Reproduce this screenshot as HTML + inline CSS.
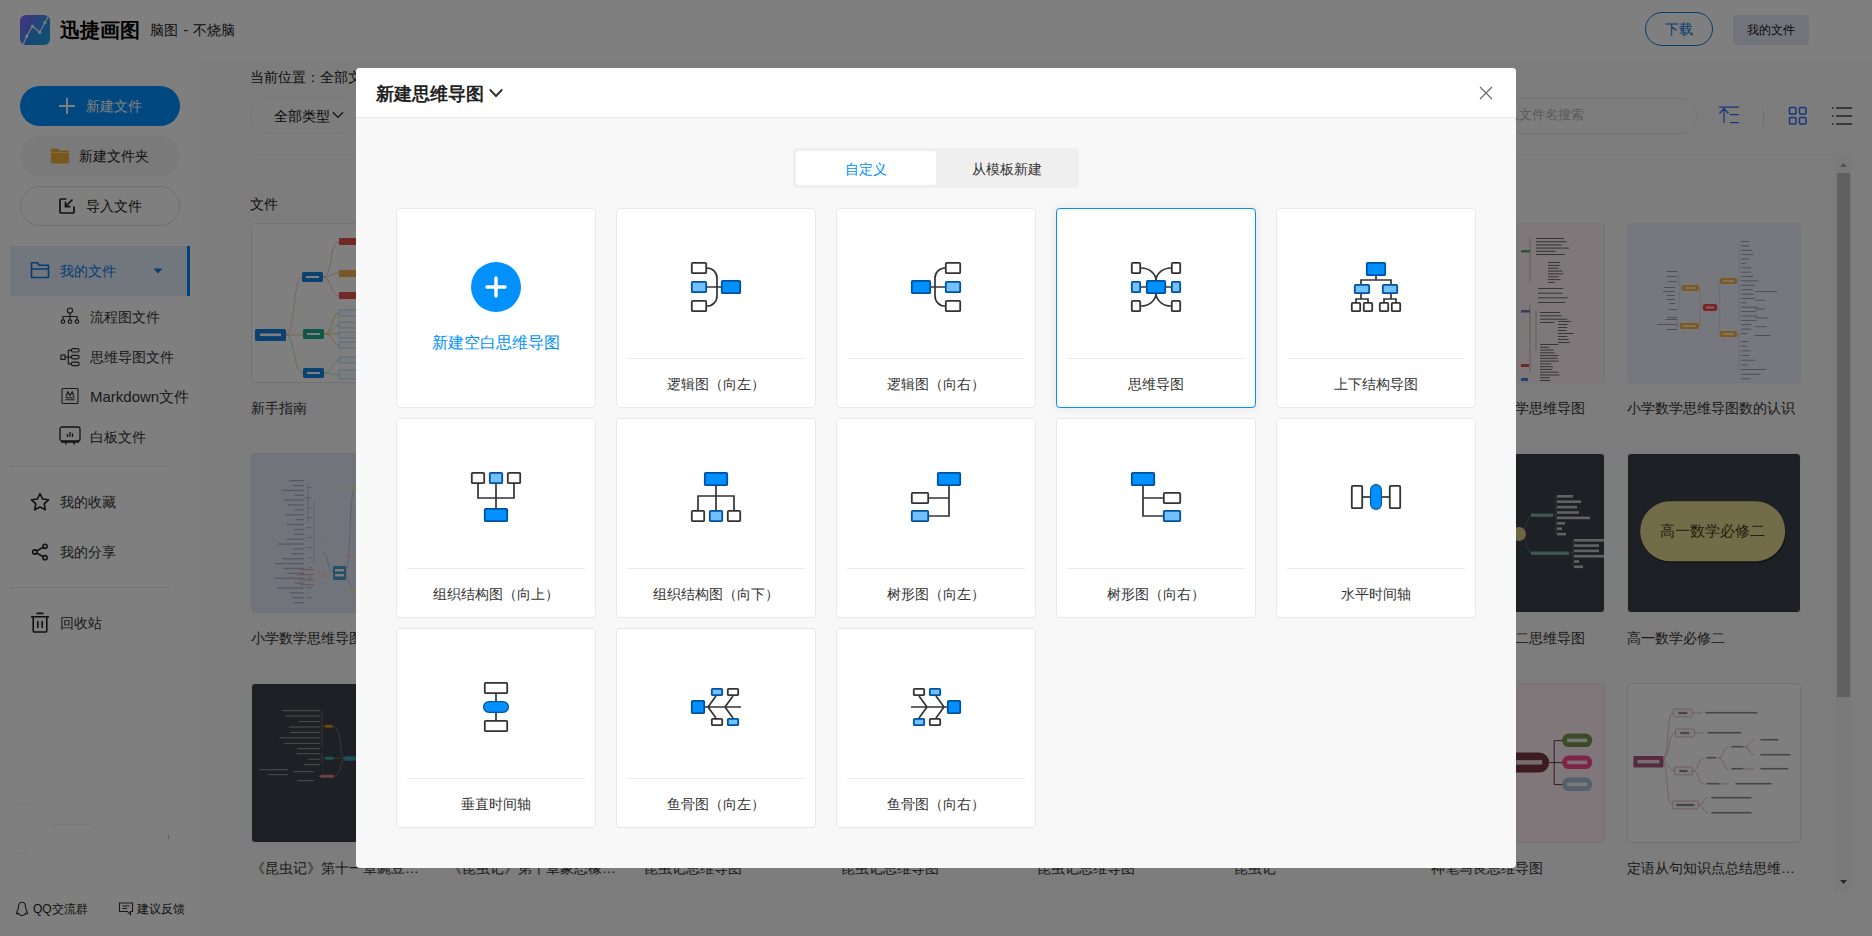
<!DOCTYPE html>
<html lang="zh">
<head>
<meta charset="utf-8">
<title>迅捷画图</title>
<style>
*{box-sizing:border-box;margin:0;padding:0}
html,body{width:1872px;height:936px;overflow:hidden;background:#fff}
body{font-family:"Liberation Sans",sans-serif;font-size:14px;color:#333;position:relative}
.abs{position:absolute}
.t{position:absolute;white-space:nowrap;line-height:20px;height:20px}
/* ---------- page ---------- */
#hdr{position:absolute;left:0;top:0;width:1872px;height:60px;background:#fff}
#side{position:absolute;left:0;top:60px;width:200px;height:876px;background:#fff}
#main{position:absolute;left:200px;top:60px;width:1672px;height:876px;background:#fafafa}
.pill{position:absolute;border-radius:20px;height:40px;width:160px;left:20px}
.thumb{position:absolute;width:174px;height:160px;border-radius:4px;overflow:hidden;border:1px solid #e6e6e6;background:#fff}
.thumb svg{position:absolute;left:0;top:0}
.lbl{position:absolute;white-space:nowrap;line-height:20px;height:20px;font-size:14px;color:#333;width:174px;overflow:hidden;text-overflow:ellipsis}
/* ---------- overlay + modal ---------- */
#mask{position:absolute;left:0;top:0;width:1872px;height:936px;background:rgba(0,0,0,.5)}
#modal{position:absolute;left:356px;top:68px;width:1160px;height:800px;background:#f8f8f8;border-radius:4px;overflow:hidden}
#mh{position:absolute;left:0;top:0;width:1160px;height:50px;background:#fff;border-bottom:1px solid #e8e8e8}
#tabs{position:absolute;left:437px;top:80px;width:286px;height:40px;background:#efefef;border-radius:4px}
#tabs .on{position:absolute;left:3px;top:3px;width:140px;height:34px;background:#fff;border-radius:3px;color:#0090ff;text-align:center;line-height:36px;font-size:14px}
#tabs .off{position:absolute;left:144px;top:3px;width:139px;height:34px;text-align:center;line-height:36px;font-size:14px;color:#333}
.card{position:absolute;width:200px;height:200px;background:#fff;border:1px solid #e8e8e8;border-radius:4px}
.card.sel{border-color:#0090ff;box-shadow:0 0 8px rgba(0,0,0,.09)}
.card svg{position:absolute;left:74px;top:53px;width:50px;height:50px;overflow:visible}
.card .ln{position:absolute;left:10px;top:149px;width:178px;height:1px;background:#ececec}
.card .nm{position:absolute;left:0;top:165px;width:198px;text-align:center;font-size:14px;line-height:20px;color:#333;white-space:nowrap}
.w{fill:#fff;stroke:#333;stroke-width:1.8}
.b{fill:#0090ff;stroke:#00529f;stroke-width:1.8}
.l{fill:#73c0ff;stroke:#00529f;stroke-width:1.8}
.k{fill:none;stroke:#333;stroke-width:1.7}
</style>
</head>
<body>
<!-- ================= PAGE (dimmed) ================= -->
<div id="hdr"><div class="abs" style="left:20px;top:15px;width:30px;height:30px;border-radius:6px;background:linear-gradient(125deg,#8a6cff 0%,#5a7cf8 35%,#2aa0ee 70%,#22c0e0 100%);overflow:hidden">
<svg width="30" height="30" viewBox="0 0 30 30"><path d="M3.5 30 L6.7 21.4 L12.4 11.2 L19.7 17.3 L24.9 7.7 L30 -1 V30 Z" fill="#1f8fe0" opacity=".45"/><path d="M2.5 31 L6.7 21.4 L12.4 11.2 L19.7 17.3 L24.9 7.7 L29 0" fill="none" stroke="#f2f6ff" stroke-width="1.2" stroke-linejoin="round"/><g fill="#f2f6ff"><circle cx="6.7" cy="21.4" r="1.6"/><circle cx="12.4" cy="11.2" r="1.6"/><circle cx="19.7" cy="17.3" r="1.6"/><circle cx="24.9" cy="7.7" r="1.6"/></g></svg></div>
<div class="t" style="left:60px;top:16px;font-size:20px;font-weight:bold;line-height:28px;height:28px;color:#000">迅捷画图</div>
<div class="t" style="left:150px;top:20px;font-size:14px;color:#222;word-spacing:1.5px">脑图 - 不烧脑</div>
<div class="abs" style="left:1645px;top:12px;width:68px;height:34px;border-radius:17px;border:1px solid #0a78dc;color:#0a78dc;text-align:center;line-height:32px;font-size:14px">下载</div>
<div class="abs" style="left:1733px;top:15px;width:76px;height:30px;border-radius:4px;background:#e3eaf6;color:#111;text-align:center;line-height:30px;font-size:12px">我的文件</div></div>
<div id="side"><div class="pill" style="top:26px;background:#0090ff"></div>
<svg class="abs" style="left:59px;top:38px" width="16" height="16" viewBox="0 0 16 16"><path d="M0 8 H16 M8 0 V16" stroke="#fff" stroke-width="2" fill="none"/></svg>
<div class="t" style="left:86px;top:36px;color:#fff">新建文件</div>
<div class="pill" style="top:76px;background:#f5f5f5"></div>
<svg class="abs" style="left:51px;top:88px" width="18" height="16" viewBox="0 0 18 16"><path d="M0 2 Q0 0.5 1.5 0.5 H6.5 L8.5 2.5 H16.5 Q18 2.5 18 4 V14 Q18 15.5 16.5 15.5 H1.5 Q0 15.5 0 14 Z" fill="#f2b13c"/><path d="M0 4.6 H18" stroke="#ffd98a" stroke-width="1"/></svg>
<div class="t" style="left:79px;top:86px;color:#222">新建文件夹</div>
<div class="pill" style="top:126px;border:1px solid #dcdcdc;background:#fff"></div>
<svg class="abs" style="left:58px;top:137px" width="18" height="18" viewBox="0 0 18 18"><path d="M8.5 2 H3 Q2 2 2 3 V15 Q2 16 3 16 H15 Q16 16 16 15 V9.5" fill="none" stroke="#222" stroke-width="1.7"/><path d="M14.5 2.5 L8 9 M7.5 4.8 V9.6 H12.3" fill="none" stroke="#222" stroke-width="1.7"/></svg>
<div class="t" style="left:86px;top:136px;color:#222">导入文件</div>
<div class="abs" style="left:10px;top:186px;width:180px;height:50px;background:#e4eefa;border-right:3px solid #0a7bea"></div>
<svg class="abs" style="left:30px;top:201px" width="20" height="18" viewBox="0 0 20 18"><path d="M1.5 16.5 V1.8 H7.5 L9.2 4.2 H18.5 V16.5 Z M1.5 8 H18.5" fill="none" stroke="#0a7bea" stroke-width="1.6" stroke-linejoin="round"/></svg>
<div class="t" style="left:60px;top:201px;color:#0a7bea">我的文件</div>
<svg class="abs" style="left:153px;top:208px" width="10" height="6" viewBox="0 0 10 6"><path d="M0.5 0.5 H9.5 L5 5.5 Z" fill="#0a7bea"/></svg>
<svg class="abs" style="left:60px;top:247px" width="20" height="18" viewBox="0 0 20 18"><g fill="none" stroke="#333" stroke-width="1.2"><circle cx="10" cy="3.6" r="2.6"/><circle cx="3" cy="14.6" r="1.8"/><circle cx="10" cy="14.6" r="1.8"/><circle cx="17" cy="14.6" r="1.8"/><path d="M10 6.2 V12.8 M3 12.8 V9.5 H17 V12.8"/></g></svg>
<div class="t" style="left:90px;top:247px">流程图文件</div>
<svg class="abs" style="left:60px;top:287px" width="20" height="20" viewBox="0 0 20 20"><g fill="none" stroke="#333" stroke-width="1.2"><rect x="1" y="8" width="4" height="4.4"/><rect x="11.5" y="1.6" width="7.5" height="3.4" rx="1.2"/><rect x="11.5" y="8.4" width="7.5" height="3.4" rx="1.2"/><rect x="11.5" y="15.2" width="7.5" height="3.4" rx="1.2"/><path d="M5 10.2 H11.5 M11.5 3.3 H8.3 V16.9 H11.5"/></g></svg>
<div class="t" style="left:90px;top:287px">思维导图文件</div>
<svg class="abs" style="left:61px;top:327px" width="18" height="18" viewBox="0 0 18 18"><g fill="none" stroke="#333" stroke-width="1.1"><rect x="1" y="1.5" width="16" height="15" rx="1"/><path d="M5 9.5 L6.8 4.8 L9 8.6 L11.2 4.8 L13 9.5 M4.5 10.8 H13.5 M4.5 12.8 H13.5"/></g></svg>
<div class="t" style="left:90px;top:327px;font-size:15px">Markdown文件</div>
<svg class="abs" style="left:59px;top:366px" width="22" height="20" viewBox="0 0 22 20"><g fill="none" stroke="#222" stroke-width="1.3"><rect x="1" y="1" width="20" height="14" rx="2"/><path d="M2 16 H20 M7.5 16 L6.5 18.5 M14.5 16 L15.5 18.5 M8.5 11 V8 M11 11 V6 M13.5 11 V7.5"/></g></svg>
<div class="t" style="left:90px;top:367px">白板文件</div>
<div class="abs" style="left:10px;top:406px;width:160px;height:1px;background:#e6e6e6"></div>
<svg class="abs" style="left:30px;top:432px" width="20" height="20" viewBox="0 0 20 20"><path d="M10 1.6 L12.6 7 L18.5 7.8 L14.2 11.9 L15.3 17.8 L10 15 L4.7 17.8 L5.8 11.9 L1.5 7.8 L7.4 7 Z" fill="none" stroke="#222" stroke-width="1.6" stroke-linejoin="round"/></svg>
<div class="t" style="left:60px;top:432px">我的收藏</div>
<svg class="abs" style="left:31px;top:483px" width="18" height="18" viewBox="0 0 18 18"><g fill="none" stroke="#222" stroke-width="1.6"><circle cx="3.8" cy="9" r="2.1"/><circle cx="14" cy="3.3" r="2.1"/><circle cx="14" cy="14.7" r="2.1"/><path d="M5.7 8 L12.1 4.3 M5.7 10 L12.1 13.7"/></g></svg>
<div class="t" style="left:60px;top:482px">我的分享</div>
<div class="abs" style="left:10px;top:527px;width:160px;height:1px;background:#e6e6e6"></div>
<svg class="abs" style="left:30px;top:552px" width="20" height="22" viewBox="0 0 20 22"><g fill="none" stroke="#222" stroke-width="1.6"><path d="M1 4.8 H19 M6.5 1.4 H13.5 M3.2 4.8 V19 Q3.2 20 4.2 20 H15.8 Q16.8 20 16.8 19 V4.8 M7.8 9 V16 M12.2 9 V16"/></g></svg>
<div class="t" style="left:60px;top:553px">回收站</div>
<div class="abs" style="left:14px;top:744px;width:22px;height:1px;background:#f0f0f0"></div>
<div class="abs" style="left:51px;top:764px;width:40px;height:1px;background:#f0f0f0"></div>
<div class="abs" style="left:14px;top:793px;width:14px;height:1px;background:#f0f0f0"></div>
<div class="abs" style="left:166px;top:703px;width:4px;height:1px;background:#f0f0f0"></div>
<div class="abs" style="left:168px;top:775px;width:1px;height:4px;background:#e8b090"></div>
<svg class="abs" style="left:15px;top:841px" width="14" height="16" viewBox="0 0 14 16"><path d="M7 1.2 C4 1.2 3.4 4 3.4 6.5 C3.4 8.3 1.6 10.2 1.6 12.2 C1.6 13.6 2.6 13 3.4 12.2 C4 14 5.2 14.6 7 14.6 C8.8 14.6 10 14 10.6 12.2 C11.4 13 12.4 13.6 12.4 12.2 C12.4 10.2 10.6 8.3 10.6 6.5 C10.6 4 10 1.2 7 1.2 Z" fill="none" stroke="#333" stroke-width="1.1"/></svg>
<div class="t" style="left:33px;top:839px;font-size:12px;color:#222">QQ交流群</div>
<svg class="abs" style="left:118px;top:842px" width="16" height="14" viewBox="0 0 16 14"><path d="M1.5 1 H14.5 V9.5 H12.5 V12.5 L9.5 9.5 H1.5 Z M4.5 4 H11.5 M4.5 6.5 H9" fill="none" stroke="#333" stroke-width="1.1"/></svg>
<div class="t" style="left:137px;top:839px;font-size:12px;color:#222">建议反馈</div></div>
<div id="main"><div class="t" style="left:50px;top:7px;color:#222">当前位置：全部文件</div>
<div class="abs" style="left:50px;top:37px;width:108px;height:37px;border:1px solid #ececec;border-radius:18.5px"></div>
<div class="t" style="left:74px;top:46px;color:#111">全部类型</div>
<svg class="abs" style="left:132px;top:51px" width="12" height="8" viewBox="0 0 12 8"><path d="M1 1.2 L6 6.4 L11 1.2" fill="none" stroke="#222" stroke-width="1.3"/></svg>
<div class="abs" style="left:50px;top:95px;width:1602px;height:1px;background:#f1f1f1"></div>
<div class="t" style="left:50px;top:134px;color:#222">文件</div>
<div class="abs" style="left:1200px;top:38px;width:298px;height:36px;border:1px solid #e6e6e6;border-radius:18px"></div>
<div class="t" style="left:1279.5px;top:45px;font-size:13.3px;color:#b4b4b4">请输入文件名搜索</div>
<svg class="abs" style="left:1518px;top:45px" width="22" height="20" viewBox="0 0 22 20"><path d="M1 2 H21 M12 9.5 H21 M12 17.5 H21 M6 18 V3.5 M1.5 8.5 L6 3.5 L10.5 8.5" fill="none" stroke="#2f6cf6" stroke-width="1.25"/></svg>
<div class="abs" style="left:1563px;top:50px;width:1px;height:16px;background:#d8d8d8"></div>
<svg class="abs" style="left:1588px;top:46px" width="20" height="20" viewBox="0 0 20 20"><g fill="none" stroke="#2f6cf6" stroke-width="1.5"><rect x="1.5" y="1.5" width="6.5" height="6.5" rx="1"/><rect x="11.5" y="1.5" width="6.5" height="6.5" rx="1"/><rect x="1.5" y="11.5" width="6.5" height="6.5" rx="1"/><rect x="11.5" y="11.5" width="6.5" height="6.5" rx="1"/></g></svg>
<svg class="abs" style="left:1631px;top:46px" width="22" height="20" viewBox="0 0 22 20"><path d="M5 2 H21 M5 10 H21 M5 18 H21 M1 2 H2.6 M1 10 H2.6 M1 18 H2.6" fill="none" stroke="#444" stroke-width="1.5"/></svg>
<div class="abs" style="left:1635px;top:96px;width:17px;height:736px;background:#f5f5f5"></div>
<div class="abs" style="left:1637px;top:113px;width:13px;height:524px;background:#c1c1c1"></div>
<svg class="abs" style="left:1640px;top:103px" width="7" height="4" viewBox="0 0 7 4"><path d="M0 4 L3.5 0 L7 4 Z" fill="#a3a3a3"/></svg>
<svg class="abs" style="left:1640px;top:820px" width="7" height="4" viewBox="0 0 7 4"><path d="M0 0 L3.5 4 L7 0 Z" fill="#505050"/></svg>
<div class="thumb" style="left:51px;top:163px;background:#fff;border-color:#e6e6e6"><svg width="174" height="160" viewBox="0 0 174 160"><g transform="translate(-1,0)"><g fill="none" stroke-width="0.8"><path d="M35 111 C44 111 42 53 51 53" stroke="#f0b8a8"/><path d="M35 111 H52" stroke="#e8c878"/><path d="M35 111 C44 111 42 149 52 149" stroke="#a8d8a8"/>
<path d="M72 53 C82 53 78 18 88 18 M72 53 C80 53 80 49 88 49 M72 53 C80 53 80 72 88 72" stroke="#f0b0a0"/>
<path d="M73 110 C82 110 80 89 88 89 M73 110 C82 110 82 101 88 101 M73 110 H88 M73 110 C82 110 82 121 88 121" stroke="#e8c878"/>
<path d="M73 149 C82 149 82 136 88 136 M73 149 C82 149 82 151 88 151" stroke="#a8d8a8"/></g>
<rect x="4" y="105" width="31" height="12" rx="1.5" fill="#1683e0"/><rect x="51" y="48" width="21" height="10" rx="1.5" fill="#1683e0"/><rect x="52" y="105" width="21" height="10" rx="1.5" fill="#1fae8c"/><rect x="52" y="144" width="21" height="10" rx="1.5" fill="#1683e0"/>
<rect x="88" y="14" width="17" height="7" fill="#e85050"/><rect x="88" y="46" width="17" height="7" fill="#f0b050"/><rect x="88" y="68" width="17" height="7" fill="#e85050"/>
<g fill="#f4faff" stroke="#9cc8f0" stroke-width="0.7"><rect x="88" y="86" width="22" height="6"/><rect x="88" y="98" width="22" height="6"/><rect x="88" y="108" width="22" height="6"/><rect x="88" y="118" width="22" height="6"/><rect x="88" y="133" width="22" height="6"/><rect x="88" y="146" width="22" height="9"/></g>
<g fill="#fff"><rect x="9" y="109.5" width="21" height="2.6"/><rect x="55" y="52" width="13" height="2"/><rect x="56" y="109" width="13" height="2"/><rect x="56" y="148" width="13" height="2"/></g></g></svg></div>
<div class="lbl" style="left:51px;top:338px">新手指南</div>
<div class="thumb" style="left:51px;top:393px;background:#e4e9f6;border-color:#dde2ee"><svg width="174" height="160" viewBox="0 0 174 160"><rect x="36.9" y="26.0" width="15.1" height="1.3" fill="#aab2c4"/><rect x="40.7" y="30.9" width="11.3" height="1.3" fill="#aab2c4"/><rect x="29.7" y="35.8" width="22.3" height="1.3" fill="#aab2c4"/><rect x="42.4" y="40.6" width="9.6" height="1.3" fill="#aab2c4"/><rect x="32.2" y="45.5" width="19.8" height="1.3" fill="#aab2c4"/><rect x="36.0" y="50.4" width="16.0" height="1.3" fill="#aab2c4"/><rect x="42.7" y="55.3" width="9.3" height="1.3" fill="#aab2c4"/><rect x="32.8" y="60.2" width="19.2" height="1.3" fill="#aab2c4"/><rect x="43.2" y="65.0" width="8.8" height="1.3" fill="#aab2c4"/><rect x="34.5" y="69.9" width="17.5" height="1.3" fill="#aab2c4"/><rect x="42.5" y="74.8" width="9.5" height="1.3" fill="#aab2c4"/><rect x="42.0" y="79.7" width="10.0" height="1.3" fill="#aab2c4"/><rect x="34.7" y="84.6" width="17.3" height="1.3" fill="#aab2c4"/><rect x="25.8" y="89.4" width="26.2" height="1.3" fill="#aab2c4"/><rect x="41.3" y="94.3" width="10.7" height="1.3" fill="#aab2c4"/><rect x="39.1" y="99.2" width="12.9" height="1.3" fill="#aab2c4"/><rect x="30.2" y="104.1" width="21.8" height="1.3" fill="#aab2c4"/><rect x="23.2" y="109.0" width="28.8" height="1.3" fill="#aab2c4"/><rect x="31.3" y="113.8" width="20.7" height="1.3" fill="#aab2c4"/><rect x="35.3" y="118.7" width="16.7" height="1.3" fill="#aab2c4"/><rect x="22.5" y="123.6" width="29.5" height="1.3" fill="#aab2c4"/><rect x="43.0" y="128.5" width="9.0" height="1.3" fill="#aab2c4"/><rect x="25.1" y="133.4" width="26.9" height="1.3" fill="#aab2c4"/><rect x="37.6" y="138.2" width="14.4" height="1.3" fill="#aab2c4"/><rect x="40.8" y="143.1" width="11.2" height="1.3" fill="#aab2c4"/><rect x="41.4" y="148.0" width="10.6" height="1.3" fill="#aab2c4"/><rect x="55.5" y="33.0" width="4.5" height="1.2" fill="#b8bfd0"/><rect x="52.9" y="43.0" width="7.1" height="1.2" fill="#b8bfd0"/><rect x="56.1" y="53.0" width="3.9" height="1.2" fill="#b8bfd0"/><rect x="54.1" y="63.0" width="5.9" height="1.2" fill="#b8bfd0"/><rect x="53.8" y="73.0" width="6.2" height="1.2" fill="#b8bfd0"/><rect x="55.1" y="83.0" width="4.9" height="1.2" fill="#b8bfd0"/><rect x="54.3" y="93.0" width="5.7" height="1.2" fill="#b8bfd0"/><rect x="56.7" y="103.0" width="3.3" height="1.2" fill="#b8bfd0"/><rect x="56.7" y="113.0" width="3.3" height="1.2" fill="#b8bfd0"/><rect x="56.0" y="123.0" width="4.0" height="1.2" fill="#b8bfd0"/><rect x="53.6" y="133.0" width="6.4" height="1.2" fill="#b8bfd0"/><rect x="54.9" y="143.0" width="5.1" height="1.2" fill="#b8bfd0"/><g fill="none" stroke="#9fb4cc" stroke-width="0.7"><path d="M56 30 V70 M62 48 V110 M94 118 C100 100 96 34 104 34 M94 121 C100 130 98 136 104 136 M81 118 C74 118 78 98 70 98"/></g><rect x="81" y="112" width="13" height="14" rx="1" fill="#4f9fd8"/><rect x="83" y="115" width="9" height="2.4" fill="#fff"/><rect x="83" y="120" width="9" height="2.4" fill="#fff"/><rect x="97" y="31" width="7" height="5" fill="#e4ecc8"/><rect x="97" y="101" width="8" height="4" fill="#f0d8d8"/><rect x="97" y="133" width="8" height="5" fill="#f0e4c8"/><rect x="68" y="82" width="6" height="5" fill="#dfe8f0"/><rect x="66" y="118" width="9" height="5" fill="#f0d8d8"/><rect x="48.2" y="115.0" width="13.8" height="1.3" fill="#e0b0b0"/><rect x="45.0" y="120.0" width="17.0" height="1.3" fill="#e0b0b0"/><rect x="46.6" y="125.0" width="15.4" height="1.3" fill="#e0b0b0"/><rect x="48.4" y="130.0" width="13.6" height="1.3" fill="#e0b0b0"/></svg></div>
<div class="lbl" style="left:51px;top:568px">小学数学思维导图</div>
<div class="thumb" style="left:51px;top:623px;background:#3a4048;border-color:#f2f2f2"><svg width="174" height="160" viewBox="0 0 174 160"><g transform="translate(0,18.2)"><rect x="30.2" y="8.0" width="37.8" height="1.0" fill="#a0a0a0"/><rect x="33.0" y="13.4" width="35.0" height="1.0" fill="#a0a0a0"/><rect x="46.7" y="18.9" width="21.3" height="1.0" fill="#a0a0a0"/><rect x="36.8" y="24.3" width="31.2" height="1.0" fill="#a0a0a0"/><rect x="38.2" y="29.7" width="29.8" height="1.0" fill="#a0a0a0"/><rect x="27.7" y="35.1" width="40.3" height="1.0" fill="#a0a0a0"/><rect x="32.1" y="40.6" width="35.9" height="1.0" fill="#a0a0a0"/><rect x="45.4" y="46.0" width="22.6" height="1.0" fill="#a0a0a0"/><rect x="44.3" y="51.0" width="23.7" height="1.0" fill="#a0a0a0"/><rect x="56.3" y="56.5" width="11.7" height="1.0" fill="#a0a0a0"/><rect x="52.1" y="62.0" width="15.9" height="1.0" fill="#a0a0a0"/><rect x="7.4" y="67.0" width="28.6" height="1.0" fill="#a0a0a0"/><rect x="15.9" y="72.0" width="20.1" height="1.0" fill="#a0a0a0"/><rect x="41.1" y="69.0" width="20.9" height="1.0" fill="#a0a0a0"/><rect x="45.6" y="78.0" width="16.4" height="1.0" fill="#a0a0a0"/><g fill="none" stroke="#8a7a70" stroke-width="0.8"><path d="M70 8 V46 M70 24 H74 M80 24 C92 24 86 56 93 56 M70 51 V62 M70 56 H74 M82 56 H93 M66 74 H68 M82 74 C90 74 88 56 93 56"/></g><rect x="73" y="22.5" width="8" height="3" rx="1.5" fill="#e08a30"/><rect x="73" y="54.5" width="9" height="3" rx="1.5" fill="#30b0a0"/><rect x="68" y="72.5" width="14" height="3" rx="1.5" fill="#e08080"/><rect x="92" y="54" width="12" height="4.5" rx="2.2" fill="#3aa0b8"/></g></svg></div>
<div class="lbl" style="left:51px;top:798px">《昆虫记》第十一章豌豆荚里的小虫</div>
<div class="lbl" style="left:248px;top:798px">《昆虫记》第十章象态橡栗象的一生</div>
<div class="lbl" style="left:444px;top:798px">昆虫记思维导图</div>
<div class="lbl" style="left:641px;top:798px">昆虫记思维导图</div>
<div class="lbl" style="left:837px;top:798px">昆虫记思维导图</div>
<div class="lbl" style="left:1034px;top:798px">昆虫记</div>
<div class="thumb" style="left:1231px;top:163px;background:#fdf0f5;border-color:#f2e6ea"><svg width="174" height="160" viewBox="0 0 174 160"><g fill="none" stroke="#90a890" stroke-width="0.7"><path d="M98 14 V58 M98 80 V148 M104 86 V126"/></g><rect x="104.0" y="14.0" width="28.0" height="1.0" fill="#6a6a6a"/><rect x="104.0" y="17.2" width="30.3" height="1.0" fill="#6a6a6a"/><rect x="104.0" y="20.4" width="25.8" height="1.0" fill="#6a6a6a"/><rect x="104.0" y="23.6" width="33.0" height="1.0" fill="#6a6a6a"/><rect x="104.0" y="26.8" width="19.5" height="1.0" fill="#6a6a6a"/><rect x="104.0" y="30.0" width="28.7" height="1.0" fill="#6a6a6a"/><rect x="116.0" y="38.0" width="11.9" height="1.0" fill="#6a6a6a"/><rect x="116.0" y="40.9" width="11.8" height="1.0" fill="#6a6a6a"/><rect x="116.0" y="43.7" width="10.6" height="1.0" fill="#6a6a6a"/><rect x="116.0" y="46.6" width="14.4" height="1.0" fill="#6a6a6a"/><rect x="116.0" y="49.4" width="15.4" height="1.0" fill="#6a6a6a"/><rect x="116.0" y="52.3" width="10.7" height="1.0" fill="#6a6a6a"/><rect x="116.0" y="55.1" width="12.6" height="1.0" fill="#6a6a6a"/><rect x="116.0" y="58.0" width="6.6" height="1.0" fill="#6a6a6a"/><rect x="106.0" y="64.0" width="25.2" height="1.0" fill="#6a6a6a"/><rect x="106.0" y="68.7" width="24.4" height="1.0" fill="#6a6a6a"/><rect x="106.0" y="73.3" width="29.9" height="1.0" fill="#6a6a6a"/><rect x="106.0" y="78.0" width="27.2" height="1.0" fill="#6a6a6a"/><rect x="108.0" y="88.0" width="19.7" height="1.0" fill="#6a6a6a"/><rect x="108.0" y="91.3" width="21.7" height="1.0" fill="#6a6a6a"/><rect x="108.0" y="94.7" width="27.4" height="1.0" fill="#6a6a6a"/><rect x="108.0" y="98.0" width="14.5" height="1.0" fill="#6a6a6a"/><rect x="126.0" y="97.0" width="12.6" height="1.0" fill="#6a6a6a"/><rect x="126.0" y="100.0" width="9.7" height="1.0" fill="#6a6a6a"/><rect x="126.0" y="103.0" width="9.2" height="1.0" fill="#6a6a6a"/><rect x="126.0" y="106.0" width="8.6" height="1.0" fill="#6a6a6a"/><rect x="126.0" y="109.0" width="15.7" height="1.0" fill="#6a6a6a"/><rect x="126.0" y="112.0" width="9.3" height="1.0" fill="#6a6a6a"/><rect x="126.0" y="115.0" width="10.5" height="1.0" fill="#6a6a6a"/><rect x="126.0" y="118.0" width="11.9" height="1.0" fill="#6a6a6a"/><rect x="108.0" y="120.0" width="18.5" height="1.0" fill="#6a6a6a"/><rect x="108.0" y="122.8" width="9.0" height="1.0" fill="#6a6a6a"/><rect x="108.0" y="125.5" width="13.4" height="1.0" fill="#6a6a6a"/><rect x="108.0" y="128.3" width="14.6" height="1.0" fill="#6a6a6a"/><rect x="108.0" y="131.1" width="18.6" height="1.0" fill="#6a6a6a"/><rect x="108.0" y="133.8" width="17.8" height="1.0" fill="#6a6a6a"/><rect x="108.0" y="136.6" width="18.4" height="1.0" fill="#6a6a6a"/><rect x="108.0" y="139.4" width="11.3" height="1.0" fill="#6a6a6a"/><rect x="108.0" y="142.2" width="13.0" height="1.0" fill="#6a6a6a"/><rect x="108.0" y="144.9" width="12.3" height="1.0" fill="#6a6a6a"/><rect x="108.0" y="147.7" width="18.6" height="1.0" fill="#6a6a6a"/><rect x="108.0" y="150.5" width="19.5" height="1.0" fill="#6a6a6a"/><rect x="108.0" y="153.2" width="9.8" height="1.0" fill="#6a6a6a"/><rect x="108.0" y="156.0" width="10.1" height="1.0" fill="#6a6a6a"/><rect x="89" y="26" width="9" height="2.5" fill="#50b070"/><rect x="89" y="86" width="9" height="2.5" fill="#8070c8"/><rect x="89" y="140" width="8" height="3" fill="#e05050"/><rect x="89" y="154" width="7" height="3" fill="#4080e0"/></svg></div>
<div class="lbl" style="left:1231px;top:338px">七年级上册数学思维导图</div>
<div class="thumb" style="left:1427px;top:163px;background:#efeffc;border-color:#e8e8f4"><svg width="174" height="160" viewBox="0 0 174 160"><g transform="translate(-1,-1)"><g fill="none" stroke="#c8c8d8" stroke-width="0.7"><path d="M76 84 C70 84 76 65 72 65 M76 84 C70 84 76 103 72 103 M90 84 C96 84 90 58 93 58 M90 84 C96 84 90 111 93 111 M110 58 H112 V20 M112 58 V100 M110 111 H112 V150 M55 65 C50 65 54 48 50 48 M55 65 C50 65 54 86 50 86 M53 103 H50 V96 M50 103 V106"/></g><rect x="76" y="81" width="14" height="7" rx="2" fill="#f04848"/><g fill="#ffb440"><rect x="55" y="62" width="17" height="6" rx="2"/><rect x="53" y="100" width="19" height="6" rx="2"/><rect x="93" y="55" width="17" height="6" rx="2"/><rect x="93" y="108" width="17" height="6" rx="2"/></g><g fill="#fff" opacity=".7"><rect x="58" y="64" width="11" height="2"/><rect x="56" y="102" width="13" height="2"/><rect x="96" y="57" width="11" height="2"/><rect x="96" y="110" width="11" height="2"/><rect x="79" y="83.5" width="8" height="2"/></g><rect x="114.0" y="18.0" width="8.0" height="1.0" fill="#9c9cac"/><rect x="114.0" y="22.4" width="8.0" height="1.0" fill="#9c9cac"/><rect x="114.0" y="26.8" width="11.3" height="1.0" fill="#9c9cac"/><rect x="114.0" y="31.1" width="12.7" height="1.0" fill="#9c9cac"/><rect x="114.0" y="35.5" width="8.4" height="1.0" fill="#9c9cac"/><rect x="114.0" y="39.9" width="5.1" height="1.0" fill="#9c9cac"/><rect x="114.0" y="44.3" width="10.4" height="1.0" fill="#9c9cac"/><rect x="114.0" y="48.7" width="9.8" height="1.0" fill="#9c9cac"/><rect x="114.0" y="53.0" width="12.4" height="1.0" fill="#9c9cac"/><rect x="114.0" y="57.4" width="17.4" height="1.0" fill="#9c9cac"/><rect x="114.0" y="61.8" width="14.0" height="1.0" fill="#9c9cac"/><rect x="114.0" y="66.2" width="11.7" height="1.0" fill="#9c9cac"/><rect x="114.0" y="70.6" width="13.0" height="1.0" fill="#9c9cac"/><rect x="114.0" y="75.0" width="13.8" height="1.0" fill="#9c9cac"/><rect x="114.0" y="79.3" width="5.7" height="1.0" fill="#9c9cac"/><rect x="114.0" y="83.7" width="16.7" height="1.0" fill="#9c9cac"/><rect x="114.0" y="88.1" width="15.1" height="1.0" fill="#9c9cac"/><rect x="114.0" y="92.5" width="16.4" height="1.0" fill="#9c9cac"/><rect x="114.0" y="96.9" width="15.4" height="1.0" fill="#9c9cac"/><rect x="114.0" y="101.2" width="10.1" height="1.0" fill="#9c9cac"/><rect x="114.0" y="105.6" width="10.2" height="1.0" fill="#9c9cac"/><rect x="114.0" y="110.0" width="6.3" height="1.0" fill="#9c9cac"/><rect x="128.0" y="68.0" width="22.0" height="1.0" fill="#9c9cac"/><rect x="128.0" y="76.8" width="9.4" height="1.0" fill="#9c9cac"/><rect x="128.0" y="85.6" width="9.5" height="1.0" fill="#9c9cac"/><rect x="128.0" y="94.4" width="12.6" height="1.0" fill="#9c9cac"/><rect x="128.0" y="103.2" width="11.6" height="1.0" fill="#9c9cac"/><rect x="128.0" y="112.0" width="15.5" height="1.0" fill="#9c9cac"/><rect x="114.0" y="118.0" width="7.2" height="1.0" fill="#9c9cac"/><rect x="114.0" y="122.7" width="6.0" height="1.0" fill="#9c9cac"/><rect x="114.0" y="127.3" width="9.3" height="1.0" fill="#9c9cac"/><rect x="114.0" y="132.0" width="8.2" height="1.0" fill="#9c9cac"/><rect x="114.0" y="136.7" width="14.0" height="1.0" fill="#9c9cac"/><rect x="114.0" y="141.3" width="6.6" height="1.0" fill="#9c9cac"/><rect x="114.0" y="146.0" width="25.2" height="1.0" fill="#9c9cac"/><rect x="114.0" y="150.7" width="19.5" height="1.0" fill="#9c9cac"/><rect x="114.0" y="155.3" width="9.3" height="1.0" fill="#9c9cac"/><rect x="114.0" y="160.0" width="11.5" height="1.0" fill="#9c9cac"/><rect x="39.9" y="48.0" width="10.1" height="1.0" fill="#9c9cac"/><rect x="39.8" y="53.0" width="10.2" height="1.0" fill="#9c9cac"/><rect x="41.3" y="58.0" width="8.7" height="1.0" fill="#9c9cac"/><rect x="37.1" y="64.0" width="10.9" height="1.0" fill="#9c9cac"/><rect x="36.0" y="68.0" width="12.0" height="1.0" fill="#9c9cac"/><rect x="39.7" y="72.0" width="8.3" height="1.0" fill="#9c9cac"/><rect x="39.6" y="76.0" width="8.4" height="1.0" fill="#9c9cac"/><rect x="42.4" y="80.0" width="5.6" height="1.0" fill="#9c9cac"/><rect x="41.6" y="86.0" width="8.4" height="1.0" fill="#9c9cac"/><rect x="40.6" y="94.0" width="9.4" height="1.0" fill="#9c9cac"/><rect x="38.3" y="96.0" width="11.7" height="1.0" fill="#9c9cac"/><rect x="30.4" y="101.0" width="19.6" height="1.0" fill="#9c9cac"/><rect x="39.7" y="106.0" width="10.3" height="1.0" fill="#9c9cac"/></g></svg></div>
<div class="lbl" style="left:1427px;top:338px">小学数学思维导图数的认识</div>
<div class="thumb" style="left:1231px;top:393px;background:#3a4048;border-color:#f2f2f2"><svg width="174" height="160" viewBox="0 0 174 160"><circle cx="87" cy="80" r="7" fill="#d8cc88"/><g fill="none" stroke="#7a7468" stroke-width="0.8"><path d="M92 76 C98 62 96 61 100 61 M92 84 C98 98 96 99 100 99 M121 61 H124 V42 M124 61 V80 M138 99 H141 V86 M141 99 V112"/></g><rect x="99" y="59.5" width="22" height="3.4" fill="#7ab0a0"/><rect x="99" y="97.5" width="38" height="3.4" fill="#7ab0a0"/><rect x="125" y="41.0" width="16" height="2.6" fill="#c4c4c4"/><rect x="125" y="46.4" width="24" height="2.6" fill="#c4c4c4"/><rect x="125" y="51.8" width="20" height="2.6" fill="#c4c4c4"/><rect x="125" y="57.2" width="22" height="2.6" fill="#c4c4c4"/><rect x="125" y="62.6" width="33" height="2.6" fill="#c4c4c4"/><rect x="125" y="68.0" width="8" height="2.6" fill="#c4c4c4"/><rect x="125" y="73.4" width="5" height="2.6" fill="#c4c4c4"/><rect x="125" y="78.8" width="9" height="2.6" fill="#c4c4c4"/><rect x="142" y="85.0" width="30" height="2.6" fill="#c4c4c4"/><rect x="142" y="90.3" width="25" height="2.6" fill="#c4c4c4"/><rect x="142" y="95.6" width="25" height="2.6" fill="#c4c4c4"/><rect x="142" y="100.9" width="30" height="2.6" fill="#c4c4c4"/><rect x="142" y="106.2" width="5" height="2.6" fill="#c4c4c4"/><rect x="142" y="111.5" width="9" height="2.6" fill="#c4c4c4"/></svg></div>
<div class="lbl" style="left:1231px;top:568px">高一数学必修二思维导图</div>
<div class="thumb" style="left:1427px;top:393px;background:#3a4048;border-color:#f2f2f2"><svg width="174" height="160" viewBox="0 0 174 160"><g transform="translate(-0.8,-0.8)"><rect x="14" y="50" width="145" height="60" rx="30" fill="#2a2d30"/><rect x="13" y="48" width="145" height="60" rx="30" fill="#e6d890"/><text x="85.5" y="82.6" text-anchor="middle" font-size="14.6" fill="#4a3c20" font-family="Liberation Sans, sans-serif">高一数学必修二</text></g></svg></div>
<div class="lbl" style="left:1427px;top:568px">高一数学必修二</div>
<div class="thumb" style="left:1231px;top:623px;background:#ffeef5;border-color:#f4e2ea"><svg width="174" height="160" viewBox="0 0 174 160"><g transform="translate(-1.8,-1.4)"><g fill="none" stroke="#4a2a30" stroke-width="0.9"><path d="M119 80 H133 M124 58 H133 M124 58 V102 H133"/></g><rect x="60" y="70" width="59" height="20" rx="10" fill="#783840"/><rect x="86" y="77.5" width="26" height="4.5" fill="#e8d8dc"/><rect x="132" y="51" width="30" height="13.5" rx="6.7" fill="#7a9450"/><rect x="132" y="73" width="30" height="13.5" rx="6.7" fill="#ff4a90"/><rect x="132" y="95" width="30" height="13.5" rx="6.7" fill="#a8c0d8"/><g fill="#fff" opacity=".85"><rect x="137" y="56" width="20" height="3.6"/><rect x="137" y="78" width="20" height="3.6"/><rect x="137" y="100" width="20" height="3.6"/></g></g></svg></div>
<div class="lbl" style="left:1231px;top:798px">神笔马良思维导图</div>
<div class="thumb" style="left:1427px;top:623px;background:#fff;border-color:#e0e0e0"><svg width="174" height="160" viewBox="0 0 174 160"><g transform="translate(-1.6,-1.1)"><g fill="none" stroke="#d8a8b8" stroke-width="0.8"><path d="M37 78 C44 60 40 30 47 30 M37 78 C44 70 42 50 49 50 M37 78 C42 78 42 88 48 88 M37 78 C42 90 40 122 46 122 M66 30 H76 M68 50 H78 M66 88 C74 88 70 75 78 75 M66 88 C74 88 70 101 78 101 M92 75 C98 75 96 64 102 64 M92 75 C98 75 96 86 102 86 M118 64 C124 64 122 57 128 57 M118 64 C124 64 122 72 128 72 M118 86 H128 M92 101 H102 M72 122 C78 122 76 115 82 115 M72 122 C78 122 76 130 82 130"/></g><rect x="7" y="73" width="30" height="11.5" rx="1" fill="#a85878"/><rect x="11" y="77" width="22" height="3.5" fill="#f0dce4"/><g fill="#fdf6f8" stroke="#d8a8b8" stroke-width="0.8"><rect x="47" y="26" width="19" height="8" rx="1"/><rect x="49" y="46" width="19" height="8" rx="1"/><rect x="48" y="84" width="18" height="8" rx="1"/><rect x="46" y="118" width="26" height="8" rx="1"/></g><g fill="#8a8a8a"><rect x="52" y="29" width="9" height="2.2"/><rect x="54" y="49" width="9" height="2.2"/><rect x="53" y="87" width="8" height="2.2"/><rect x="50" y="121" width="18" height="2.2"/><rect x="79" y="29" width="52" height="1.6"/><rect x="81" y="49" width="34" height="1.6"/><rect x="80" y="74" width="10" height="1.6"/><rect x="80" y="100" width="13" height="1.6"/><rect x="105" y="63" width="12" height="1.6"/><rect x="105" y="85" width="12" height="1.6"/><rect x="134" y="56" width="18" height="1.6"/><rect x="134" y="71" width="30" height="1.6"/><rect x="134" y="85" width="28" height="1.6"/><rect x="109" y="100" width="36" height="1.6"/><rect x="85" y="114" width="40" height="1.6"/><rect x="85" y="129" width="40" height="1.6"/></g></g></svg></div>
<div class="lbl" style="left:1427px;top:798px">定语从句知识点总结思维导图</div></div>
<div id="mask"></div>
<!-- ================= MODAL ================= -->
<div id="modal">
<div id="mh"><div class="t" style="left:20px;top:14px;font-size:18px;font-weight:bold;line-height:24px;height:24px;color:#222">新建思维导图</div>
<svg class="abs" style="left:132px;top:19px" width="16" height="12" viewBox="0 0 16 12"><path d="M1.8 2.5 L8 9 L14.2 2.5" fill="none" stroke="#333" stroke-width="1.9"/></svg>
<svg class="abs" style="left:1123px;top:18px" width="14" height="14" viewBox="0 0 14 14"><path d="M1 1 L13 13 M13 1 L1 13" fill="none" stroke="#666" stroke-width="1.1"/></svg></div>
<div id="tabs"><div class="on">自定义</div><div class="off">从模板新建</div></div>
<div class="card" style="left:40px;top:140px"><div class="abs" style="left:74px;top:53px;width:50px;height:50px;border-radius:25px;background:#0090ff"></div>
<svg viewBox="0 0 50 50"><path d="M16 25 H34 M25 16 V34" fill="none" stroke="#fff" stroke-width="3.5" stroke-linecap="round"/></svg>
<div class="nm" style="top:123px;font-size:16px;line-height:22px;color:#0090ff">新建空白思维导图</div></div>
<div class="card" style="left:260px;top:140px"><svg viewBox="0 0 50 50"><path class="k" d="M16 6 A10 10 0 0 1 26 16 V34 A10 10 0 0 1 16 44 M16 25 H30"/><rect class="w" x="0.8" y="0.8" width="14.4" height="10.4" rx="1"/><rect class="l" x="0.8" y="19.8" width="14.4" height="10.4" rx="1"/><rect class="w" x="0.8" y="38.8" width="14.4" height="10.4" rx="1"/><rect class="b" x="30.8" y="18.8" width="18.4" height="12.4" rx="1"/></svg><div class="ln"></div><div class="nm">逻辑图（向左）</div></div>
<div class="card" style="left:480px;top:140px"><svg viewBox="0 0 50 50"><path class="k" d="M34 6 A10 10 0 0 0 24 16 V34 A10 10 0 0 0 34 44 M34 25 H20"/><rect class="w" x="34.8" y="0.8" width="14.4" height="10.4" rx="1"/><rect class="l" x="34.8" y="19.8" width="14.4" height="10.4" rx="1"/><rect class="w" x="34.8" y="38.8" width="14.4" height="10.4" rx="1"/><rect class="b" x="0.8" y="18.8" width="18.4" height="12.4" rx="1"/></svg><div class="ln"></div><div class="nm">逻辑图（向右）</div></div>
<div class="card sel" style="left:700px;top:140px"><svg viewBox="0 0 50 50"><path class="k" d="M10 6 A15 13 0 0 1 25 18 M40 6 A15 13 0 0 0 25 18 M10 44 A15 13 0 0 0 25 32 M40 44 A15 13 0 0 1 25 32 M10 25 H40"/><rect class="w" x="0.8" y="0.8" width="8.4" height="10.4" rx="1"/><rect class="w" x="40.8" y="0.8" width="8.4" height="10.4" rx="1"/><rect class="l" x="0.8" y="19.8" width="8.4" height="10.4" rx="1"/><rect class="l" x="40.8" y="19.8" width="8.4" height="10.4" rx="1"/><rect class="w" x="0.8" y="38.8" width="8.4" height="10.4" rx="1"/><rect class="w" x="40.8" y="38.8" width="8.4" height="10.4" rx="1"/><rect class="b" x="15.8" y="18.8" width="18.4" height="12.4" rx="1"/></svg><div class="ln"></div><div class="nm">思维导图</div></div>
<div class="card" style="left:920px;top:140px"><svg viewBox="0 0 50 50"><path class="k" d="M25 14 V18 M10 22 V18 H40 V22 M10 32 V37 M5 40 V37 H17 V40 M40 32 V37 M33 40 V37 H45 V40"/><rect class="b" x="15.8" y="0.8" width="18.4" height="12.4" rx="1"/><rect class="l" x="3.8" y="22.8" width="14.4" height="8.4" rx="1"/><rect class="l" x="31.8" y="22.8" width="14.4" height="8.4" rx="1"/><rect class="w" x="0.8" y="40.8" width="8.4" height="8.4" rx="1"/><rect class="w" x="12.8" y="40.8" width="8.4" height="8.4" rx="1"/><rect class="w" x="28.8" y="40.8" width="8.4" height="8.4" rx="1"/><rect class="w" x="40.8" y="40.8" width="8.4" height="8.4" rx="1"/></svg><div class="ln"></div><div class="nm">上下结构导图</div></div>
<div class="card" style="left:40px;top:350px"><svg viewBox="0 0 50 50"><path class="k" d="M7 12 V26 H43 V12 M25 12 V36"/><rect class="w" x="0.8" y="0.8" width="12.4" height="10.4" rx="1"/><rect class="l" x="18.8" y="0.8" width="12.4" height="10.4" rx="1"/><rect class="w" x="36.8" y="0.8" width="12.4" height="10.4" rx="1"/><rect class="b" x="13.8" y="36.8" width="22.4" height="12.4" rx="1"/></svg><div class="ln"></div><div class="nm">组织结构图（向上）</div></div>
<div class="card" style="left:260px;top:350px"><svg viewBox="0 0 50 50"><path class="k" d="M7 38 V24 H43 V38 M25 14 V38"/><rect class="b" x="13.8" y="0.8" width="22.4" height="12.4" rx="1"/><rect class="w" x="0.8" y="38.8" width="12.4" height="10.4" rx="1"/><rect class="l" x="18.8" y="38.8" width="12.4" height="10.4" rx="1"/><rect class="w" x="36.8" y="38.8" width="12.4" height="10.4" rx="1"/></svg><div class="ln"></div><div class="nm">组织结构图（向下）</div></div>
<div class="card" style="left:480px;top:350px"><svg viewBox="0 0 50 50"><path class="k" d="M38 14 V44 H18 M38 26 H18"/><rect class="b" x="26.8" y="0.8" width="22.4" height="12.4" rx="1"/><rect class="w" x="0.8" y="20.8" width="16.4" height="10.4" rx="1"/><rect class="l" x="0.8" y="38.8" width="16.4" height="10.4" rx="1"/></svg><div class="ln"></div><div class="nm">树形图（向左）</div></div>
<div class="card" style="left:700px;top:350px"><svg viewBox="0 0 50 50"><path class="k" d="M12 14 V44 H32 M12 26 H32"/><rect class="b" x="0.8" y="0.8" width="22.4" height="12.4" rx="1"/><rect class="w" x="32.8" y="20.8" width="16.4" height="10.4" rx="1"/><rect class="l" x="32.8" y="38.8" width="16.4" height="10.4" rx="1"/></svg><div class="ln"></div><div class="nm">树形图（向右）</div></div>
<div class="card" style="left:920px;top:350px"><svg viewBox="0 0 50 50"><path class="k" d="M12 25 H38"/><rect class="w" x="0.8" y="13.8" width="10.4" height="22.4" rx="1"/><rect x="19.6" y="12.6" width="10.8" height="24.8" rx="5.4" fill="#0090ff" stroke="#0057a8" stroke-width="1.2"/><rect class="w" x="38.8" y="13.8" width="10.4" height="22.4" rx="1"/></svg><div class="ln"></div><div class="nm">水平时间轴</div></div>
<div class="card" style="left:40px;top:560px"><svg viewBox="0 0 50 50"><path class="k" d="M25 12 V38"/><rect class="w" x="13.8" y="0.8" width="22.4" height="10.4" rx="1"/><rect x="12.6" y="19.6" width="24.8" height="10.8" rx="5.4" fill="#0090ff" stroke="#0057a8" stroke-width="1.4"/><rect class="w" x="13.8" y="38.8" width="22.4" height="10.4" rx="1"/></svg><div class="ln"></div><div class="nm">垂直时间轴</div></div>
<div class="card" style="left:260px;top:560px"><svg viewBox="0 0 50 50"><path class="k" d="M14 25 H50 M25 14 L17 25 L25 36 M42 14 L34 25 L42 36"/><rect class="b" x="0.8" y="18.8" width="12.4" height="12.4" rx="1"/><rect class="l" x="20.8" y="6.8" width="10.4" height="6.4" rx="1"/><rect class="w" x="36.8" y="6.8" width="10.4" height="6.4" rx="1"/><rect class="w" x="20.8" y="36.8" width="10.4" height="6.4" rx="1"/><rect class="l" x="36.8" y="36.8" width="10.4" height="6.4" rx="1"/></svg><div class="ln"></div><div class="nm">鱼骨图（向左）</div></div>
<div class="card" style="left:480px;top:560px"><svg viewBox="0 0 50 50"><path class="k" d="M36 25 H0 M25 14 L33 25 L25 36 M8 14 L16 25 L8 36"/><rect class="b" x="36.8" y="18.8" width="12.4" height="12.4" rx="1"/><rect class="l" x="18.8" y="6.8" width="10.4" height="6.4" rx="1"/><rect class="w" x="2.8" y="6.8" width="10.4" height="6.4" rx="1"/><rect class="w" x="18.8" y="36.8" width="10.4" height="6.4" rx="1"/><rect class="l" x="2.8" y="36.8" width="10.4" height="6.4" rx="1"/></svg><div class="ln"></div><div class="nm">鱼骨图（向右）</div></div>
</div>
</body>
</html>
